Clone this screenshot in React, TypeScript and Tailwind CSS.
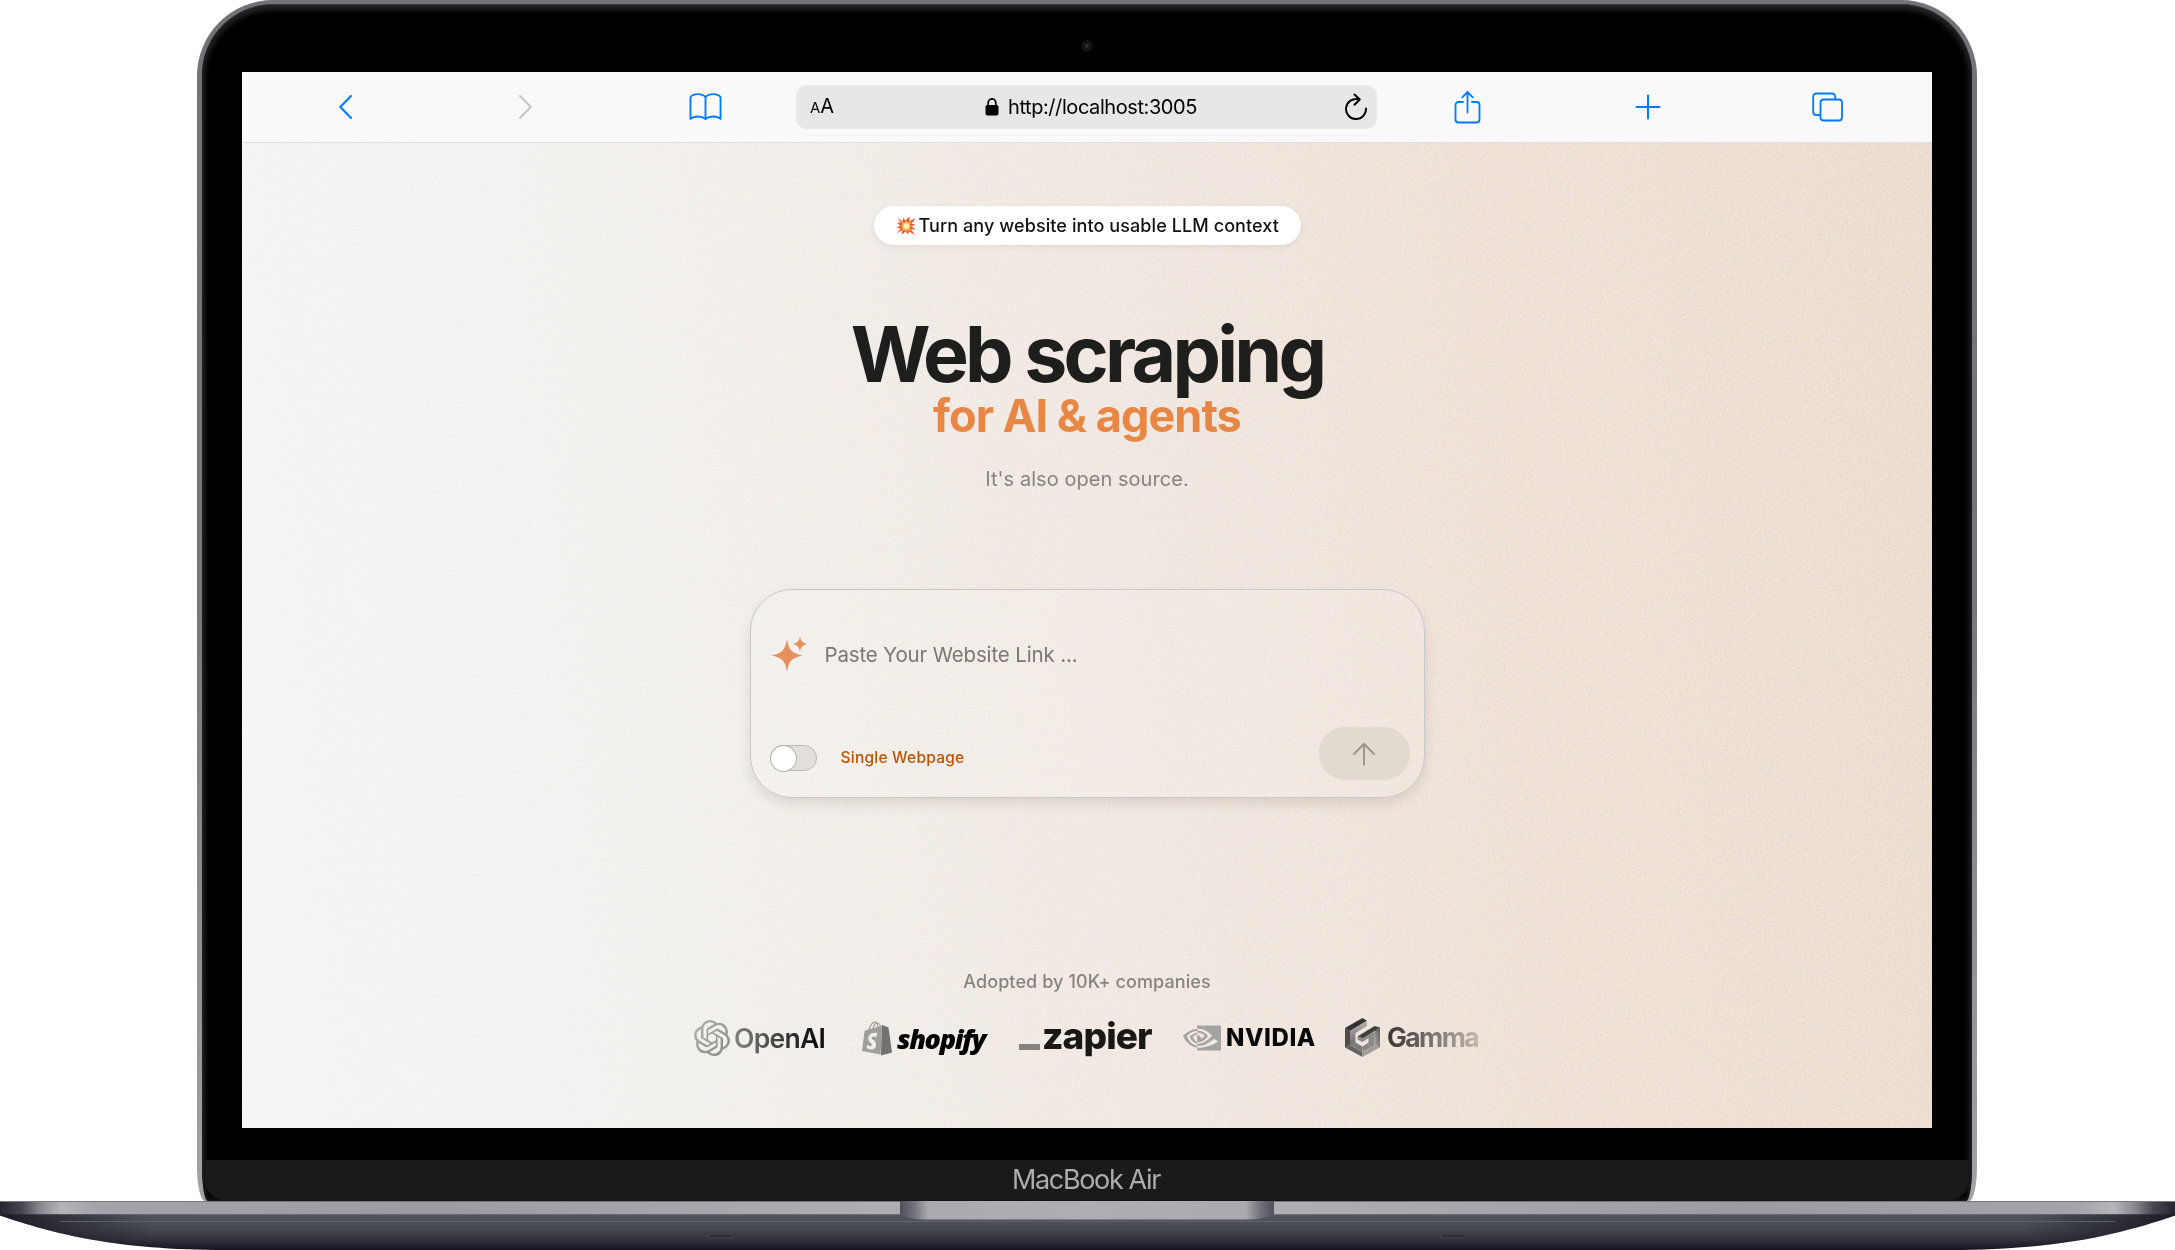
import React from "react";
import { SiNvidia, SiOpenai, SiShopify } from "react-icons/si";

const stroke = {
  fill: "none",
  stroke: "currentColor",
  strokeWidth: 1.9,
  strokeLinecap: "round" as const,
  strokeLinejoin: "round" as const,
};

function Toolbar() {
  return (
    <header className="flex h-[71px] shrink-0 items-center border-b border-[#dfe0e2] bg-[#f9f9f9] text-[#007aff]">
      <div className="flex h-full w-[554px] items-center">
        <svg className="ml-[96px] h-[26px] w-[15px]" viewBox="0 0 15 26" {...stroke} strokeWidth={2}>
          <path d="M13 2 2.3 13 13 24" />
        </svg>
        <svg className="ml-[165px] h-[26px] w-[15px] text-[#c6c6c8]" viewBox="0 0 15 26" {...stroke} strokeWidth={2}>
          <path d="M2 2 12.7 13 2 24" />
        </svg>
        <svg className="ml-[156px] h-[28px] w-[33px]" viewBox="0 0 34 28" {...stroke} strokeWidth={1.9}>
          <path d="M17 4C14-.3 4-.3 1.500 4v22.300C5 23 13 23 17 26.300 21 23 29 23 32.500 26.300V4C30-.3 20-.3 17 4zM17 4v22.300" />
        </svg>
      </div>
      <div className="flex h-[44px] w-[581px] items-center rounded-[10px] border border-[#ebebeb] bg-[#e7e7e7] text-black">
        <div className="ml-[13px] flex w-[175px] items-baseline leading-[24px]">
          <span className="text-[15px]">A</span>
          <span className="text-[20px]">A</span>
        </div>
        <svg className="h-[18px] w-[14px]" viewBox="0 0 14 18">
          <rect x="0.500" y="7" width="13" height="10.500" rx="1.800" fill="#000" />
          <path d="M3.200 8V5a3.800 4.200 0 0 1 7.600 0v3" fill="none" stroke="#000" strokeWidth="1.700" />
        </svg>
        <span className="ml-[9px] w-[336px] whitespace-nowrap text-[20px] leading-[26px] tracking-[-0.420px]">
          http://localhost:3005
        </span>
        <svg className="mb-[2px] h-[27px] w-[24px]" viewBox="0 0 24 27" fill="none" stroke="#000" strokeWidth="1.900" strokeLinecap="round" strokeLinejoin="round">
          <path d="M14.500 6.300A10 10 0 1 0 22 15.500M10.500 1.500l5.300 5-5.300 5.200" />
        </svg>
      </div>
      <div className="flex h-full flex-1 items-center">
        <svg className="ml-[77px] h-[34px] w-[27px]" viewBox="0 0 27 34" {...stroke} strokeWidth={1.8}>
          <path d="M9 12H4.500a3 3 0 0 0-3 3v14.500a3 3 0 0 0 3 3h18a3 3 0 0 0 3-3V15a3 3 0 0 0-3-3H18M13.500 22.500V2M8.300 7.300 13.500 2l5.200 5.300" />
        </svg>
        <svg className="ml-[154px] h-[26px] w-[26px]" viewBox="0 0 26 26" {...stroke} strokeWidth={2}>
          <path d="M13 1.500v23M1.500 13h23" />
        </svg>
        <svg className="ml-[151px] h-[30px] w-[31px]" viewBox="0 0 31 30" {...stroke} strokeWidth={1.8}>
          <rect x="8.500" y="7.500" width="21.500" height="21" rx="3" />
          <path d="M23.200 7V4.500a3 3 0 0 0-3-3H4.200a3 3 0 0 0-3 3v15.500a3 3 0 0 0 3 3h4" />
        </svg>
      </div>
    </header>
  );
}

function Burst() {
  return (
    <svg className="h-[20px] w-[20px]" viewBox="0 0 20 20">
      <path
        d="M1.500 2 7 5.500 7.200 1.500 9.300 4.800 13.500.5l-.2 4.700L19.500 2.300l-4 5.500 3.700.6-3.700 2 4 3.200-4.500-.3 4 6-6-4-1 3.300-2.300-3.200-4 3 .6-4.600L.8 17.500l4-4.900-4-.8 3.500-2.300L.8 6.800l4.200-.3z"
        fill="#f0522f"
      />
      <path d="m5 5.500 3.500 1L10 4l1.500 2.300 4-1.300-1.600 3.500 2.300 1.700-2.300 1.500 1.200 3.500-3.200-1-1.600 2.500-1.700-2.600-3.400 1.400L6.600 12l-2.500-1.500 2.300-1.800z" fill="#f9a63a" />
      <path d="m7.300 7.200 1.900.6.900-1.500 1 1.400 2.200-.5-.8 1.900 1.300 1.100-1.400.9.500 1.900-1.800-.6-1 1.400-1-1.500-1.900.7.600-2-1.300-.9 1.400-1z" fill="#fff3b4" />
    </svg>
  );
}

function PromptCard() {
  return (
    <section className="mt-[96px] flex h-[209px] w-[675px] flex-col rounded-[42px] border-[1.5px] border-[#c6c8ca] bg-white/10 shadow-[0_6px_12px_rgba(90,70,60,0.14)]">
      <div className="mt-[47px] flex h-[36px] items-center">
        <svg className="mb-[2px] ml-[20px] h-[36px] w-[37px]" viewBox="0 0 37 36" fill="#e8905c">
          <path d="M16 3c1.700 10.500 4.500 14.500 16 16.500C20.500 21.500 17.700 25 16 36 14.300 25 11.500 21.500 0 19.500 11.500 17.500 14.300 13.500 16 3z" />
          <path d="M29 0c.8 5 2.300 7 7.500 8-5.200 1-6.700 3-7.500 8-.8-5-2.300-7-7.500-8 5.200-1 6.700-3 7.500-8z" />
        </svg>
        <span className="ml-[17px] text-[20.500px] leading-[28px] tracking-[-0.150px] text-[#7c7772]">Paste Your Website Link ...</span>
      </div>
      <div className="mt-[54px] flex h-[54px]">
        <div className="ml-[19px] mt-[18px] flex h-[26px] w-[47px] items-center rounded-full border border-[#bdb9b4] bg-[#e3dfda]">
          <span className="h-[25px] w-[25px] rounded-full bg-white shadow-[0_0_0_1px_#b5b2ae]" />
        </div>
        <span className="ml-[24px] mt-[20px] w-[478px] text-[15.500px] font-medium leading-[22px] tracking-[0.230px] text-[#bd5200]">
          Single Webpage
        </span>
        <button className="flex h-[53px] w-[91px] items-center justify-center rounded-[26px] bg-[#e2d9d0]">
          <svg className="h-[24px] w-[24px]" viewBox="0 0 24 24" fill="none" stroke="#9d968b" strokeWidth="2" strokeLinecap="round" strokeLinejoin="round">
            <path d="M12 22.500V2M2 12 12 1.800 22 12" />
          </svg>
        </button>
      </div>
    </section>
  );
}

function GammaMark() {
  return (
    <svg className="h-[39px] w-[35px]" viewBox="0 0 35 39">
      <defs>
        <linearGradient id="gammaFace" x1="0" x2="1" y1="1" y2="0">
          <stop offset="0" stopColor="#a9a6a3" />
          <stop offset="1" stopColor="#5d5c5b" />
        </linearGradient>
        <linearGradient id="gammaInner" x1="0" x2="0" y1="0" y2="1">
          <stop offset="0" stopColor="#b5b2af" />
          <stop offset="1" stopColor="#6e6d6b" />
        </linearGradient>
      </defs>
      <path d="M0 10 17.500 0 22 2.800 5 13z" fill="#333" />
      <path d="M0 10 5 13v14L0 29.500z" fill="#4b4b4b" />
      <path d="M5 13 22 2.800V8L10.500 15v10.500L5 28z" fill="url(#gammaInner)" />
      <path d="M0 29.500 5 27l12.500 7v5z" fill="#636261" />
      <path d="M5 27l5.500-2.500 7 4V34z" fill="#7f7d7b" />
      <path d="M17.500 39v-5L29.500 27l5.500 2.300z" fill="#a19f9c" />
      <path d="M35 9.500v19.800L29.500 27V12.500z" fill="url(#gammaFace)" />
      <path d="M12.500 18.500 29.500 8 35 9.500 18 20.500z" fill="#3f3f3f" />
      <path d="M12.500 18.500 18 20.500l11.500-7V27l-12 7v-5.500l6-4V20l-6 4-5-2.500z" fill="#8b8987" />
    </svg>
  );
}

function ShopifyBag() {
  return (
    <span className="relative flex h-[36px] w-[33px]">
      <svg className="absolute left-[20px] top-[5px] h-[31px] w-[12px]" viewBox="0 0 12 31">
        <path d="M2 0 8.500 2.500 12 27.500 1 30.500z" fill="#727170" />
      </svg>
      <SiShopify className="h-[36px] w-[33px]" fill="#a09f9d" />
    </span>
  );
}

function Logos() {
  return (
    <div className="mt-[24px] flex h-[39px] w-[786px] items-center">
      <svg width="0" height="0" className="absolute">
        <defs>
          <linearGradient id="openaiMark" x1="0" x2="1" y1="0" y2="1">
            <stop offset="0" stopColor="#b5b3b0" />
            <stop offset="1" stopColor="#858481" />
          </linearGradient>
        </defs>
      </svg>
      <div className="flex w-[167px] items-center">
        <SiOpenai className="h-[36px] w-[36px]" fill="url(#openaiMark)" />
        <span className="ml-[4px] bg-linear-to-r from-[#858482] to-[#101010] to-90% bg-clip-text text-[26.500px] font-semibold leading-[36px] tracking-[-0.700px] text-transparent">
          OpenAI
        </span>
      </div>
      <div className="flex w-[160px] items-center">
        <ShopifyBag />
        <span className="ml-[4px] mt-[2px] whitespace-nowrap font-['Open_Sans'] text-[27px] font-extrabold italic leading-[36px] tracking-[-1.350px] text-black">
          shopify
        </span>
      </div>
      <div className="flex w-[165px] items-end">
        <span className="mb-[9px] h-[6px] w-[21px] bg-[#858381]" />
        <span className="mb-[3px] ml-[2px] text-[37px] font-extrabold leading-[40px] tracking-[-0.900px] text-[#191817]">zapier</span>
      </div>
      <div className="flex w-[163px] items-center">
        <SiNvidia className="h-[38px] w-[38px]" fill="#a4a3a1" />
        <span className="ml-[5px] text-[24px] font-extrabold leading-[38px] tracking-[0.600px] text-[#080808]">NVIDIA</span>
      </div>
      <div className="flex items-center">
        <GammaMark />
        <span className="mb-[2px] ml-[7px] bg-linear-to-r from-[#383634] to-[#c5bab1] bg-clip-text pr-[2px] text-[26.500px] font-bold leading-[38px] tracking-[-1.600px] text-transparent">
          Gamma
        </span>
      </div>
    </div>
  );
}

function Base() {
  return (
    <svg className="block h-[49px] w-[2175px]" viewBox="0 0 2175 49">
      <defs>
        <linearGradient id="strip" x1="0" x2="1" y1="0" y2="0">
          <stop offset="0" stopColor="#25262f" />
          <stop offset="0.010" stopColor="#45464e" />
          <stop offset="0.018" stopColor="#85868c" />
          <stop offset="0.028" stopColor="#b4b5b9" />
          <stop offset="0.045" stopColor="#a3a4a9" />
          <stop offset="0.200" stopColor="#9b9ca1" />
          <stop offset="0.400" stopColor="#adaeb2" />
          <stop offset="0.600" stopColor="#adaeb2" />
          <stop offset="0.800" stopColor="#9b9ca1" />
          <stop offset="0.955" stopColor="#a3a4a9" />
          <stop offset="0.972" stopColor="#b4b5b9" />
          <stop offset="0.982" stopColor="#85868c" />
          <stop offset="0.990" stopColor="#45464e" />
          <stop offset="1" stopColor="#25262f" />
        </linearGradient>
        <linearGradient id="under" x1="0" x2="0" y1="0" y2="1">
          <stop offset="0" stopColor="#55575f" />
          <stop offset="0.400" stopColor="#474951" />
          <stop offset="0.700" stopColor="#32333d" />
          <stop offset="1" stopColor="#12131e" />
        </linearGradient>
        <linearGradient id="edges" x1="0" x2="1" y1="0" y2="0">
          <stop offset="0" stopColor="#15161f" stopOpacity="0.900" />
          <stop offset="0.070" stopColor="#15161f" stopOpacity="0" />
          <stop offset="0.930" stopColor="#15161f" stopOpacity="0" />
          <stop offset="1" stopColor="#15161f" stopOpacity="0.900" />
        </linearGradient>
        <linearGradient id="notch" x1="0" x2="1" y1="0" y2="0">
          <stop offset="0" stopColor="#4f5058" />
          <stop offset="0.040" stopColor="#75767d" />
          <stop offset="0.075" stopColor="#a9aaae" />
          <stop offset="0.500" stopColor="#adaeb2" />
          <stop offset="0.925" stopColor="#a9aaae" />
          <stop offset="0.960" stopColor="#75767d" />
          <stop offset="1" stopColor="#4f5058" />
        </linearGradient>
      </defs>
      <path d="M0 13H2175V14.500C2120 33 2060 49 1949 49H226C115 49 55 33 0 14.500z" fill="url(#under)" />
      <path d="M0 13H2175V14.500C2120 33 2060 49 1949 49H226C115 49 55 33 0 14.500z" fill="url(#edges)" />
      <path d="M60 20.500H2115" stroke="#6d6f76" strokeWidth="1" opacity="0.700" />
      <path d="M0 0H2175V13.300H0z" fill="url(#strip)" />
      <path d="M0 .5H2175" stroke="#77787e" strokeWidth="1" />
      <path d="M900 0h374v13c-7 4-16 5.500-26 5.500H926c-10 0-19-1.500-26-5.500z" fill="url(#notch)" />
      <g fill="#2e2f38" stroke="#484952" strokeWidth="0.800">
        <rect x="709" y="33" width="24" height="4" rx="2" />
        <rect x="1441" y="33" width="24" height="4" rx="2" />
      </g>
    </svg>
  );
}

export default function App() {
  return (
    <div className="h-[1250px] w-[2175px] overflow-hidden bg-white font-['Inter',sans-serif]">
      <div className="ml-[197px] h-[1201px] w-[1780px] rounded-[76px_76px_8px_8px/76px_76px_34px_34px] bg-linear-to-b from-[#727379] via-[#76777d] to-[#a2a3a9] p-[4px_5px_0]">
        <div className="h-full rounded-[71px_71px_6px_6px/71px_71px_34px_34px] border-t border-[#3d3e42] bg-black shadow-[inset_0_2px_5px_3px_#222324]">
          <div className="flex h-[67px] items-center justify-center">
            <span className="mt-[15px] flex h-[12px] w-[12px] items-center justify-center rounded-full bg-[#131316]">
              <span className="h-[4px] w-[4px] rounded-full bg-[#29303c]" />
            </span>
          </div>
          <div className="ml-[40px] flex h-[1056px] w-[1690px] flex-col overflow-hidden">
            <Toolbar />
            <main className="relative flex flex-1 flex-col items-center bg-[linear-gradient(85deg,#f5f5f7_0%,#f3f1ee_25%,#f1e9e3_52%,#efe2d8_75%,#edddd0_100%)]">
              <svg className="pointer-events-none absolute inset-0 h-full w-full opacity-70 mix-blend-soft-light">
                <filter id="grain" x="0" y="0" width="100%" height="100%" colorInterpolationFilters="sRGB">
                  <feTurbulence type="fractalNoise" baseFrequency="0.450" numOctaves="2" />
                  <feComponentTransfer>
                    <feFuncA type="linear" slope="0" intercept="1" />
                  </feComponentTransfer>
                </filter>
                <rect width="100%" height="100%" filter="url(#grain)" />
              </svg>
              <div className="relative flex w-full flex-1 flex-col items-center">
                <div className="mt-[63px] flex h-[39px] w-[427px] items-center rounded-full bg-white pl-[22px] shadow-[0_2px_6px_rgba(0,0,0,0.070)]">
                  <Burst />
                  <span className="ml-[3px] whitespace-nowrap text-[18px] font-medium leading-[24px] tracking-[0.090px] text-[#121212]">
                    Turn any website into usable LLM context
                  </span>
                </div>
                <h1 className="mt-[71px] flex flex-col items-center whitespace-nowrap font-bold">
                  <span className="text-[77px] leading-[76px] tracking-[-3.800px] text-[#1e1e1c]">Web scraping</span>
                  <span className="text-[45px] leading-[48px] tracking-[-0.950px] text-[#e88744]">for AI &amp; agents</span>
                </h1>
                <p className="mt-[25px] text-[20px] leading-[28px] tracking-[0.050px] text-[#858481]">It's also open source.</p>
                <PromptCard />
                <p className="mt-[172px] text-[18px] font-medium leading-[24px] tracking-[0.100px] text-[#858481]">Adopted by 10K+ companies</p>
                <Logos />
              </div>
            </main>
          </div>
          <div className="mx-[3px] mt-[32px] flex h-[40px] items-center justify-center rounded-b-[20px] bg-[#1a1a1a]">
            <span className="mr-[2px] text-[27px] leading-[36px] tracking-[-1.350px] text-[#acacb1]">MacBook Air</span>
          </div>
        </div>
      </div>
      <Base />
    </div>
  );
}
